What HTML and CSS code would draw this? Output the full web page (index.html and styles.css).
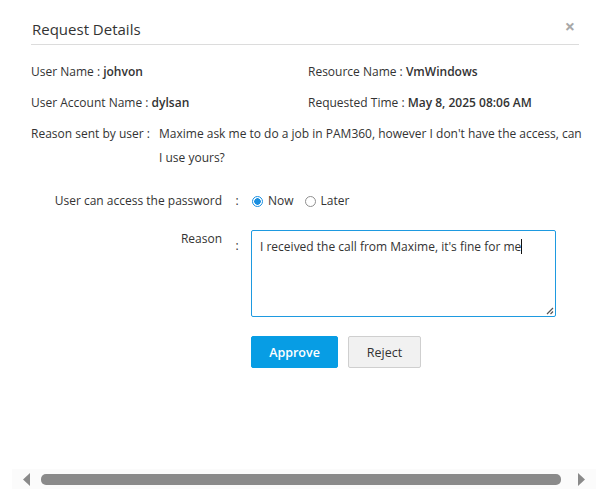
FILE: index.html
```html
<!DOCTYPE html>
<html>
<head>
<meta charset="utf-8">
<link rel="stylesheet" href="styles.css">
</head>
<body>
<div class="dialog">
  <div class="header">
    <div class="title">Request Details</div>
    <div class="close">&times;</div>
  </div>
  <div class="info">
    <div class="cell">User Name : <b>johvon</b></div>
    <div class="cell">Resource Name : <b>VmWindows</b></div>
    <div class="cell">User Account Name : <b>dylsan</b></div>
    <div class="cell">Requested Time : <b>May 8, 2025 08:06 AM</b></div>
    <div class="reason-row">
      <div class="reason-label">Reason sent by user :</div>
      <div class="reason-text">Maxime ask me to do a job in PAM360, however I don't have the access, can I use yours?</div>
    </div>
  </div>
  <div class="form">
    <div class="frow access">
      <div class="flabel">User can access the password</div>
      <div class="colon">:</div>
      <div class="fctl radios">
        <span class="radio checked"></span><span class="rlabel">Now</span>
        <span class="radio"></span><span class="rlabel">Later</span>
      </div>
    </div>
    <div class="frow reason">
      <div class="flabel rl">Reason</div>
      <div class="colon rc">:</div>
      <div class="fctl">
        <div class="textarea">I received the call from Maxime, it's fine for me<span class="caret"></span>
          <svg class="grip" width="9" height="9" viewBox="0 0 9 9"><path d="M8 2 L2 8 M8 5.5 L5.5 8" stroke="#555" stroke-width="1.2" fill="none"/></svg>
        </div>
      </div>
    </div>
    <div class="frow buttons">
      <div class="flabel"></div>
      <div class="colon"></div>
      <div class="fctl btns">
        <button class="btn primary">Approve</button>
        <button class="btn">Reject</button>
      </div>
    </div>
  </div>
  <div class="hscroll">
    <svg class="arrow" width="7" height="13" viewBox="0 0 7 13"><path d="M7 0 L0 6.5 L7 13 Z" fill="#8a8a8a"/></svg>
    <div class="thumb"></div>
    <svg class="arrow" width="7" height="13" viewBox="0 0 7 13"><path d="M0 0 L7 6.5 L0 13 Z" fill="#8a8a8a"/></svg>
  </div>
</div>
</body>
</html>
```
FILE: styles.css
```css
* { box-sizing: border-box; }
html, body { margin: 0; padding: 0; background: #fff; }
body {
  font-family: "Open Sans", "Liberation Sans", sans-serif;
  font-size: 12px;
  color: #333;
  width: 608px;
  height: 499px;
  overflow: hidden;
}
.dialog {
  display: flex;
  flex-direction: column;
  height: 499px;
}
.header {
  margin: 0 29px 0 31px;
  height: 45px;
  border-bottom: 1px solid #dcdcdc;
  display: flex;
  align-items: flex-end;
  justify-content: space-between;
}
.title {
  font-size: 15px;
  line-height: 20px;
  color: #333;
  padding-left: 1px;
  padding-bottom: 5px;
}
.close {
  font-size: 18px;
  color: #a8a8a8;
  font-weight: bold;
  line-height: 18px;
  padding-bottom: 9px;
  margin-right: 4px;
}
.info {
  display: grid;
  grid-template-columns: 277px 1fr;
  row-gap: 7px;
  padding: 15px 12px 0 31px;
  line-height: 24px;
}
.info b { font-weight: 600; }
.reason-row {
  grid-column: 1 / span 2;
  display: flex;
}
.reason-label { width: 128px; flex: none; }
.reason-text { flex: 1; padding-right: 14px; }
.form {
  padding-top: 19px;
  display: flex;
  flex-direction: column;
}
.frow { display: flex; }
.flabel {
  width: 222px;
  text-align: right;
  flex: none;
}
.colon {
  width: 29px;
  flex: none;
  text-align: center;
  padding-left: 1px;
}
.access { line-height: 24px; }
.radios { display: flex; align-items: center; }
.radio {
  width: 11px;
  height: 11px;
  border: 1px solid #8f8f8f;
  border-radius: 50%;
  display: inline-block;
  margin-left: 1px;
  margin-right: 5px;
}
.radio.checked {
  border-color: #1a8fe0;
  background: radial-gradient(circle, #1a8fe0 0 3px, #fff 3.5px);
}
.rlabel { margin-right: 10px; }
.reason { margin-top: 17px; }
.rl { line-height: 18px; }
.rc { padding-top: 7px; }
.textarea {
  position: relative;
  width: 305px;
  height: 87px;
  border: 1px solid #1e9ae0;
  border-radius: 2px;
  padding: 7px 8px;
  line-height: 18px;
  color: #333;
}
.caret {
  display: inline-block;
  width: 1px;
  height: 15px;
  background: #111;
  vertical-align: -3px;
}
.grip { position: absolute; right: 1px; bottom: 1px; }
.buttons { margin-top: 19px; }
.btns { display: flex; gap: 10px; }
.btn {
  font-family: "Open Sans", "Liberation Sans", sans-serif;
  font-size: 12.5px;
  height: 32px;
  border: 1px solid #cfcfcf;
  background: #f1f1f1;
  color: #333;
  border-radius: 2px;
  padding: 0;
  width: 73px;
}
.btn.primary {
  background: #079de4;
  border-color: #079de4;
  color: #fff;
  font-weight: 600;
  width: 87px;
}
.hscroll {
  margin: auto 12px 10px 12px;
  height: 20px;
  background: #fbfbfb;
  display: flex;
  align-items: center;
  padding: 0 11px;
  gap: 11px;
}
.thumb {
  flex: 1;
  height: 11px;
  border-radius: 5px;
  background: #8a8a8a;
  margin-right: 6px;
}
```
